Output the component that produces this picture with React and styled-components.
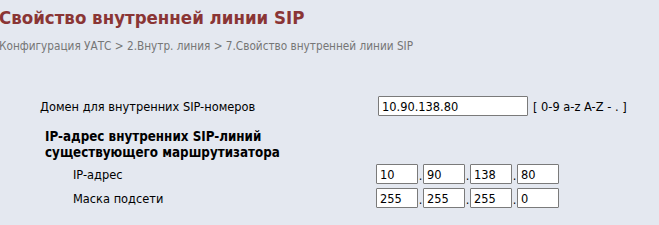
import React from "react"
import styled, { createGlobalStyle } from "styled-components"

const Global = createGlobalStyle`
    html, body {
        margin: 0;
        padding: 0;
        background: #e4e8f0;
        overflow: hidden;
    }
    body {
        font-family: "DejaVu Sans Condensed", "DejaVu Sans", Verdana, sans-serif;
        font-size: 12.7px;
        color: #000000;
    }
`

export default function App(){
    const ip = ['10', '90', '138', '80']
    const mask = ['255', '255', '255', '0']
    return(
    <Page>
        <Global/>
        <Title>Свойство внутренней линии SIP</Title>
        <Crumbs>Конфигурация УАТС &gt; 2.Внутр. линия &gt; 7.Свойство внутренней линии SIP</Crumbs>
        <Form>
            <Row>
                <Label>Домен для внутренних SIP-номеров</Label>
                <Field>
                    <TextInput defaultValue="10.90.138.80" />
                    <Hint>[ 0-9 a-z A-Z - . ]</Hint>
                </Field>
            </Row>
            <GroupTitle>IP-адрес внутренних SIP-линий<br/>существующего маршрутизатора</GroupTitle>
            <Row $sub>
                <Label $indent>IP-адрес</Label>
                <Field>
                    {ip.map((item, index) => (
                        <React.Fragment key={`ip ${index}`}>
                            {index > 0 && <Dot>.</Dot>}
                            <Octet defaultValue={item} />
                        </React.Fragment>
                    ))}
                </Field>
            </Row>
            <Row $sub>
                <Label $indent>Маска подсети</Label>
                <Field>
                    {mask.map((item, index) => (
                        <React.Fragment key={`mask ${index}`}>
                            {index > 0 && <Dot>.</Dot>}
                            <Octet defaultValue={item} />
                        </React.Fragment>
                    ))}
                </Field>
            </Row>
        </Form>
    </Page>
)
}

const Page = styled.div`
    padding-top: 6px;
`

const Title = styled.h1`
    margin: 0 0 0 -1px;
    font-size: 18.5px;
    line-height: 24px;
    font-weight: bold;
    color: #8a3535;
`

const Crumbs = styled.div`
    margin: 9px 0 0 -1px;
    font-size: 11.7px;
    line-height: 14px;
    color: #767676;
`

const Form = styled.div`
    margin-top: 43px;
    padding-left: 40px;
`

const Row = styled.div`
    display: grid;
    grid-template-columns: ${p => p.$sub ? '336px' : '338px'} auto;
    align-items: center;
    height: ${p => p.$sub ? '24px' : '20px'};
`

const Label = styled.div`
    padding-left: ${p => p.$indent ? '33px' : '0'};
`

const Field = styled.div`
    display: flex;
    align-items: center;
`

const TextInput = styled.input`
    box-sizing: border-box;
    width: 150px;
    height: 20px;
    padding: 0 3px;
    border: 1px solid #7a7a7a;
    border-radius: 1px;
    background: #ffffff;
    font-family: "DejaVu Sans Condensed", "DejaVu Sans", Verdana, sans-serif;
    font-size: 12.7px;
    color: #000000;
    outline: none;
`

const Hint = styled.span`
    margin-left: 5px;
`

const GroupTitle = styled.div`
    margin: 13px 0 1px 5px;
    font-size: 13.3px;
    font-weight: bold;
    line-height: 16px;
`

const Octet = styled.input`
    box-sizing: border-box;
    width: 42px;
    height: 20px;
    padding: 0 3px;
    border: 1px solid #7a7a7a;
    border-radius: 1px;
    background: #ffffff;
    font-family: "DejaVu Sans Condensed", "DejaVu Sans", Verdana, sans-serif;
    font-size: 12.7px;
    color: #000000;
    outline: none;
`

const Dot = styled.span`
    width: 5px;
    align-self: flex-end;
    line-height: 16px;
    text-align: center;
`
